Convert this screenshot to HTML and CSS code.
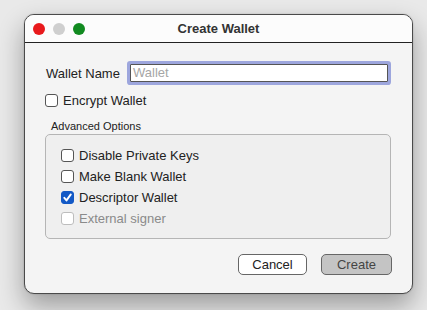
FILE: index.html
```html
<!DOCTYPE html>
<html>
<head>
<meta charset="utf-8">
<link rel="stylesheet" href="styles.css">
</head>
<body>
<div class="window">
  <div class="titlebar">
    <div class="lights">
      <span class="light red"></span>
      <span class="light gray"></span>
      <span class="light green"></span>
    </div>
    <div class="title">Create Wallet</div>
  </div>
  <div class="content">
    <div class="name-row">
      <label class="name-label">Wallet Name</label>
      <div class="input"><span class="placeholder">Wallet</span></div>
    </div>
    <div class="check-row encrypt">
      <span class="box"></span><span class="check-text">Encrypt Wallet</span>
    </div>
    <div class="group-title">Advanced Options</div>
    <div class="group">
      <div class="check-row"><span class="box"></span><span class="check-text">Disable Private Keys</span></div>
      <div class="check-row"><span class="box"></span><span class="check-text">Make Blank Wallet</span></div>
      <div class="check-row"><span class="box checked"><svg width="13" height="13" viewBox="0 0 13 13"><path d="M3.3 6.8 L5.5 9.4 L9.8 3.4" fill="none" stroke="#fff" stroke-width="1.9" stroke-linecap="round" stroke-linejoin="round"/></svg></span><span class="check-text">Descriptor Wallet</span></div>
      <div class="check-row disabled"><span class="box"></span><span class="check-text">External signer</span></div>
    </div>
    <div class="buttons">
      <div class="btn cancel">Cancel</div>
      <div class="btn create">Create</div>
    </div>
  </div>
</div>
</body>
</html>
```
FILE: styles.css
```css
html, body {
  margin: 0;
  padding: 0;
}
body {
  width: 427px;
  height: 310px;
  background: #e9e9e9;
  font-family: "Liberation Sans", Arial, sans-serif;
  color: #222;
  padding: 14px 0 0 24px;
  box-sizing: border-box;
  overflow: hidden;
}
.window {
  width: 389px;
  height: 280px;
  box-sizing: border-box;
  border: 1px solid #4a4a4a;
  border-radius: 10px;
  background: #f4f4f4;
  box-shadow: 0 12px 26px rgba(0,0,0,0.33), 0 0 2px rgba(0,0,0,0.2);
  overflow: hidden;
  display: flex;
  flex-direction: column;
}
.titlebar {
  height: 27px;
  border-bottom: 1px solid #222;
  background: #fcfcfc;
  display: flex;
  align-items: center;
  position: relative;
}
.lights {
  display: flex;
  gap: 8px;
  padding-left: 8px;
}
.light {
  width: 12px;
  height: 12px;
  border-radius: 50%;
  display: block;
}
.light.red { background: #e8191c; }
.light.gray { background: #cfcfcf; }
.light.green { background: #118a20; }
.title {
  position: absolute;
  left: 0;
  right: 0;
  text-align: center;
  font-weight: bold;
  font-size: 13px;
  color: #333;
  top: 6px;
}
.content {
  padding: 21px 20px 0 20px;
  display: flex;
  flex-direction: column;
}
.name-row {
  display: flex;
  align-items: center;
  height: 18px;
  padding-left: 1px;
}
.name-label {
  font-size: 13px;
  width: 84px;
}
.input {
  width: 258px;
  height: 18px;
  box-sizing: border-box;
  border: 1px solid #555;
  background: #fff;
  box-shadow: 0 0 0 3px #9da6dd;
  border-radius: 1px;
  font-size: 13px;
  line-height: 16px;
  padding-left: 2px;
}
.placeholder { color: #a6a6a6; }
.check-row {
  display: flex;
  align-items: center;
  height: 21px;
  font-size: 13px;
}
.encrypt {
  margin-top: 8px;
}
.box {
  width: 13px;
  height: 13px;
  box-sizing: border-box;
  border: 1px solid #555;
  border-radius: 3px;
  background: #fff;
  margin-right: 5px;
  display: block;
  flex: none;
}
.box.checked {
  background: #1359c6;
  border-color: #1359c6;
}
.box.checked svg { display: block; margin: -1px; }
.disabled .box { border-color: #bdbdbd; }
.disabled .check-text { color: #8a8a8a; }
.group-title {
  font-size: 11px;
  margin-top: 9px;
  padding-left: 6px;
  height: 14px;
  line-height: 13px;
}
.group {
  margin-top: 0px;
  width: 346px;
  height: 105px;
  box-sizing: border-box;
  border: 1px solid #b5b5b5;
  border-radius: 5px;
  background: #efefef;
  padding: 10px 0 0 15px;
}
.buttons {
  display: flex;
  justify-content: flex-end;
  gap: 14px;
  margin-top: 15px;
}
.btn {
  height: 21px;
  box-sizing: border-box;
  border-radius: 5px;
  font-size: 13px;
  line-height: 19px;
  text-align: center;
}
.cancel {
  width: 69px;
  border: 1px solid #666;
  background: #fff;
}
.create {
  width: 71px;
  border: 1px solid #666;
  background: #c4c4c4;
  color: #444;
}
```
